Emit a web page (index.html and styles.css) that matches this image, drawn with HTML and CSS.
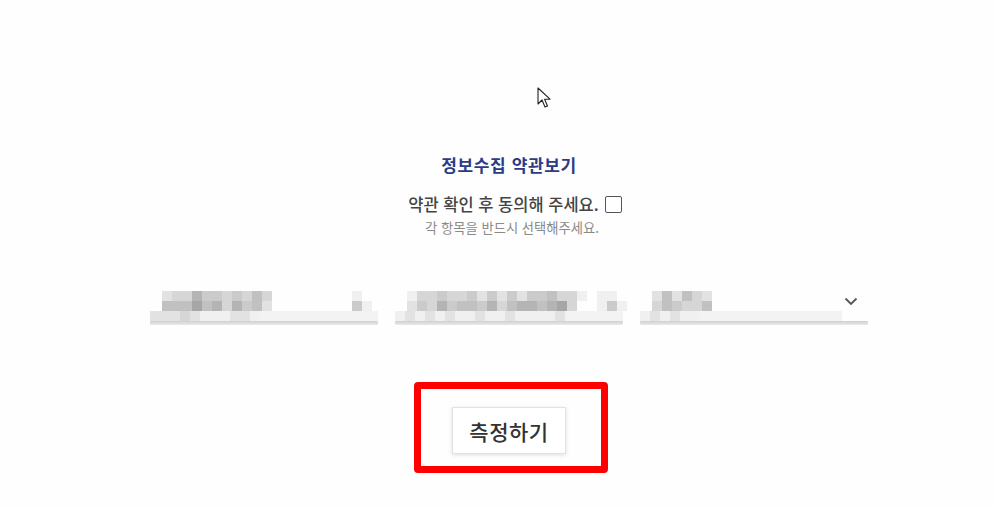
FILE: index.html
```html
<!DOCTYPE html>
<html lang="ko">
<head>
<meta charset="utf-8">
<title>정보수집 약관보기</title>
<link rel="stylesheet" href="styles.css">
</head>
<body>
<main class="page">
  <h2 class="title">정보수집 약관보기</h2>
  <div class="agree">약관 확인 후 동의해 주세요. <span class="checkbox"></span></div>
  <p class="note">각 항목을 반드시 선택해주세요.</p>

  <div class="fields">
    <div class="field f1">
      <div class="mrow"><i class="s2"></i><i class="s3"></i><i class="s3"></i><i class="s6"></i><i class="s4"></i><i class="s4"></i><i class="s3"></i><i class="s4"></i><i class="s3"></i><i class="s5"></i><i class="s3"></i><i></i><i></i><i></i><i></i><i></i><i></i><i></i><i></i><i class="s1"></i></div>
      <div class="mrow"><i class="s5"></i><i class="s5"></i><i class="s5"></i><i class="s7"></i><i class="s5"></i><i class="s6"></i><i class="s3"></i><i class="s6"></i><i class="s4"></i><i class="s5"></i><i class="s2"></i><i></i><i></i><i></i><i></i><i></i><i></i><i></i><i></i><i class="s4"></i><i class="s1"></i></div>
      <div class="mrow band"><i class="s2"></i><i class="s2"></i><i class="s2"></i><i class="s3"></i><i class="s2"></i><i class="s1"></i><i class="s1"></i><i class="s1"></i><i class="s2"></i><i class="s2"></i><i class="s1"></i></div>
      <div class="line"></div>
    </div>

    <div class="field f2">
      <div class="mrow"><i class="s1"></i><i class="s3"></i><i class="s3"></i><i class="s4"></i><i class="s3"></i><i class="s3"></i><i class="s4"></i><i class="s2"></i><i class="s4"></i><i class="s2"></i><i class="s4"></i><i class="s2"></i><i class="s4"></i><i class="s4"></i><i class="s5"></i><i class="s3"></i><i class="s3"></i><i class="s1"></i><i></i><i class="s1"></i><i class="s1"></i></div>
      <div class="mrow"><i class="s2"></i><i class="s4"></i><i class="s3"></i><i class="s6"></i><i class="s4"></i><i class="s5"></i><i class="s5"></i><i class="s4"></i><i class="s6"></i><i class="s3"></i><i class="s5"></i><i class="s6"></i><i class="s6"></i><i class="s5"></i><i class="s6"></i><i class="s7"></i><i class="s3"></i><i></i><i></i><i class="s1"></i><i class="s4"></i><i class="s1"></i></div>
      <div class="mrow band"><i class="s1"></i><i class="s2"></i><i class="s1"></i><i class="s2"></i><i class="s1"></i><i class="s2"></i><i class="s1"></i><i class="s1"></i><i class="s2"></i><i class="s1"></i><i class="s1"></i><i class="s2"></i><i class="s1"></i><i class="s1"></i><i class="s1"></i><i class="s1"></i><i class="s2"></i></div>
      <div class="line"></div>
    </div>

    <div class="field f3">
      <div class="mrow"><i class="s2"></i><i class="s5"></i><i class="s2"></i><i class="s5"></i><i class="s3"></i><i class="s2"></i>
        <svg class="chev" width="14" height="9" viewBox="0 0 14 9"><path d="M1.5 1.5 L7 7 L12.5 1.5" fill="none" stroke="#555" stroke-width="1.8"/></svg>
      </div>
      <div class="mrow"><i class="s3"></i><i class="s5"></i><i class="s4"></i><i class="s3"></i><i class="s3"></i><i class="s5"></i></div>
      <div class="mrow band short"><i class="s1"></i><i class="s2"></i><i class="s1"></i><i class="s2"></i><i class="s1"></i><i class="s1"></i></div>
      <div class="line"></div>
    </div>
  </div>

  <div class="action">
    <div class="highlight">
      <button class="measure" type="button">측정하기</button>
    </div>
  </div>
</main>

<svg class="cursor" width="14" height="22" viewBox="0 0 14 22">
  <path d="M1 1 L1 17 L5 13 L8 20 L10.5 19 L7.6 12.2 L13 12.2 Z" fill="#fff" stroke="#222" stroke-width="1.1" stroke-linejoin="round"/>
</svg>
</body>
</html>
```

FILE: styles.css
```css
* { box-sizing: border-box; }

html, body {
  margin: 0;
  padding: 0;
  background: #fefefe;
}

body {
  width: 995px;
  height: 508px;
  overflow: hidden;
  position: relative;
  font-family: "Noto Sans CJK KR", "Noto Sans", sans-serif;
  color: #444;
}

.page {
  width: 718px;
  margin-left: 150px;
  padding-top: 154px;
  display: flex;
  flex-direction: column;
  align-items: center;
}

.title {
  margin: 0;
  font-size: 17px;
  line-height: 22px;
  font-weight: 700;
  color: #2c3b86;
  letter-spacing: 0.6px;
}

.agree {
  margin-top: 16px;
  display: flex;
  align-items: center;
  gap: 6px;
  font-size: 16.5px;
  line-height: 24px;
  font-weight: 500;
  color: #444;
  padding-left: 12px;
}

.checkbox {
  display: inline-block;
  width: 17px;
  height: 17px;
  border: 1.5px solid #555;
  border-radius: 2px;
  background: #fff;
}

.note {
  margin: 4px 0 0;
  font-size: 13.3px;
  line-height: 16px;
  color: #8a8a8a;
  padding-left: 6px;
}

.fields {
  margin-top: 55px;
  width: 100%;
  display: flex;
  gap: 17px;
}

.field {
  width: 228px;
  display: flex;
  flex-direction: column;
}

.mrow {
  height: 10px;
  display: flex;
  align-items: stretch;
  padding-left: 12px;
  position: relative;
}

.mrow i {
  display: block;
  width: 10px;
  flex: none;
}

.mrow.band {
  background: #f3f3f3;
  padding-left: 0;
}

.mrow.band.short {
  margin-right: 26px;
}

.s1 { background: #f0f0f0; }
.s2 { background: #e2e2e2; }
.s3 { background: #d6d6d6; }
.s4 { background: #cbcbcb; }
.s5 { background: #c1c1c1; }
.s6 { background: #b4b4b4; }
.s7 { background: #a6a6a6; }

.line {
  height: 4px;
  background: linear-gradient(#d0d0d0, #eaeaea);
  border-radius: 1px;
}

.chev {
  position: absolute;
  right: 10px;
  top: 6px;
}

.action {
  margin-top: 57px;
  display: flex;
  justify-content: center;
  padding-left: 4px;
}

.highlight {
  border: 7px solid #ff0000;
  border-radius: 4px;
  padding: 18px 35px 12px 31px;
}

.measure {
  width: 114px;
  height: 47px;
  border: 1px solid #e2e2e2;
  background: #fff;
  box-shadow: 0 1px 4px rgba(0, 0, 0, 0.12);
  font-family: "Noto Sans CJK KR", "Noto Sans", sans-serif;
  font-size: 21px;
  font-weight: 500;
  color: #333;
  padding: 0;
  letter-spacing: 0.5px;
}

.cursor {
  position: absolute;
  left: 537px;
  top: 87px;
}
```
